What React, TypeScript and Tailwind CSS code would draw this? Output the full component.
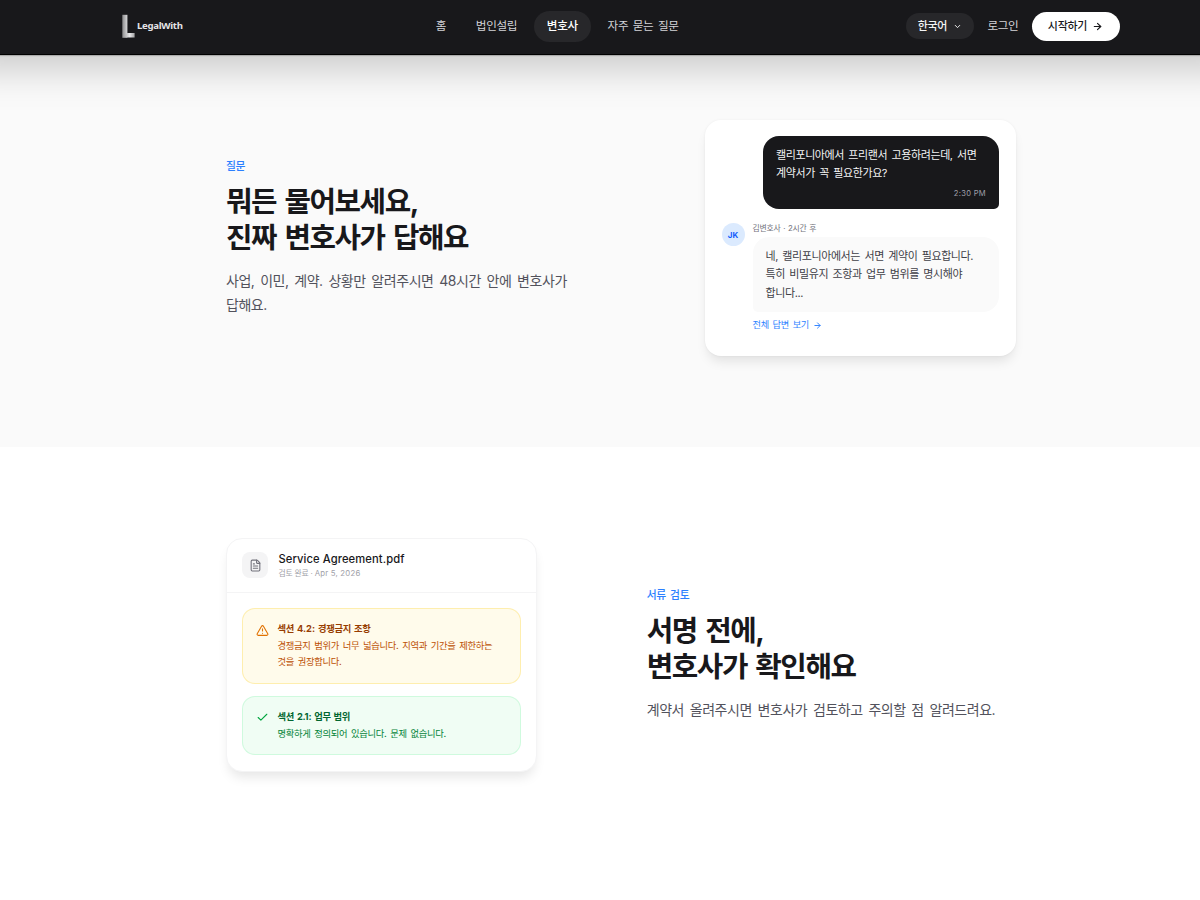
import { ArrowRight, Check, ChevronDown, FileText, TriangleAlert } from "lucide-react";

const navItems = [
  { label: "홈", active: false },
  { label: "법인설립", active: false },
  { label: "변호사", active: true },
  { label: "자주 묻는 질문", active: false },
];

function Logo() {
  return (
    <a href="#" className="flex items-center">
      <svg width="13" height="24" viewBox="0 0 13 24">
        <defs>
          <linearGradient id="stem" x1="0" x2="1">
            <stop offset="0" stopColor="#8b8b8d" />
            <stop offset="1" stopColor="#d8d8da" />
          </linearGradient>
          <linearGradient id="foot" x1="0" x2="1">
            <stop offset="0" stopColor="#8f8f91" />
            <stop offset="0.6" stopColor="#e8e8ea" />
            <stop offset="1" stopColor="#a0a0a2" />
          </linearGradient>
        </defs>
        <path d="M0.3 0.8H5.4V23.6H0.3Z" fill="url(#stem)" />
        <path d="M0.3 23.6L5.4 19H12.6V23.6Z" fill="url(#foot)" />
      </svg>
      <span className="ml-[2px] font-['Noto_Sans'] text-[9.6px] font-bold text-zinc-200">LegalWith</span>
    </a>
  );
}

function Header() {
  return (
    <header className="relative z-10 flex h-[55px] items-center border-b border-black bg-[#18181b] pr-[80.5px] pb-[2px] pl-[122px] text-[11.6px] tracking-[-0.3px] shadow-[0_-16px_34px_32px_rgba(0,0,0,0.18),0_1px_1px_rgba(0,0,0,0.2)]">
      <div className="w-[301px]">
        <Logo />
      </div>
      <nav className="flex items-center gap-[4px]">
        {navItems.map((item) => (
          <a
            key={item.label}
            href="#"
            className={
              item.active
                ? "flex h-[31px] items-center rounded-full bg-[#27272a] px-[12.8px] pt-px font-medium text-white"
                : "flex h-[31px] items-center rounded-full px-[12.8px] pt-px text-zinc-300 [word-spacing:1.5px]"
            }
          >
            {item.label}
          </a>
        ))}
      </nav>
      <div className="ml-auto flex items-center">
        <button className="flex h-[26px] w-[68px] items-center justify-center gap-[6px] rounded-full bg-[#27272a] pt-px pr-px text-[11px] font-medium text-zinc-100">
          한국어
          <ChevronDown size={9} strokeWidth={2.5} />
        </button>
        <a href="#" className="ml-[13px] pt-px text-zinc-300">
          로그인
        </a>
        <button className="ml-[13px] flex h-[29px] w-[88px] items-center justify-center gap-[5px] rounded-full bg-white pt-px text-[11px] font-medium text-zinc-900">
          시작하기
          <ArrowRight size={11} strokeWidth={2.5} />
        </button>
      </div>
    </header>
  );
}

interface IntroProps {
  label: string;
  title: string[];
  text: string;
}

function Intro({ label, title, text }: IntroProps) {
  return (
    <div>
      <p className="mb-[10px] text-[10.8px] leading-[15px] font-medium tracking-[-0.4px] text-blue-500 [word-spacing:1.8px]">
        {label}
      </p>
      <h2 className="mb-[12px] text-[28.8px] leading-[36.5px] font-bold tracking-[-1.45px] text-zinc-900 [word-spacing:3px]">
        {title.map((line) => (
          <span key={line} className="block">
            {line}
          </span>
        ))}
      </h2>
      <p className="pb-px text-[14px] leading-[24px] tracking-[-0.45px] break-keep text-zinc-600 [word-spacing:2.2px]">
        {text}
      </p>
    </div>
  );
}

function ChatCard() {
  return (
    <div className="ml-auto h-[236px] w-[310.5px] rounded-[16px] bg-white px-[16.5px] py-[16px] shadow-[0_8px_12px_-3px_rgba(0,0,0,0.1),0_0_3px_rgba(0,0,0,0.05)]">
      <div className="ml-auto h-[73px] w-[236px] rounded-[16px] rounded-br-[5px] bg-[#18181b] px-[13px] pt-[10px] text-[11px] leading-[18.3px] text-zinc-100">
        <p className="tracking-[-0.41px] [word-spacing:1.7px]">
          캘리포니아에서 프리랜서 고용하려는데, 서면
          <br />
          계약서가 꼭 필요한가요?
        </p>
        <p className="mt-[5px] text-right text-[7.6px] leading-[12px] tracking-[0.3px] text-zinc-400">2:30 PM</p>
      </div>
      <div className="mt-[13px] flex gap-[8px]">
        <div className="mt-[1px] flex size-[23px] shrink-0 items-center justify-center rounded-full bg-blue-100 text-[8px] font-bold text-blue-600">
          JK
        </div>
        <div className="grow">
          <p className="text-[7.8px] leading-[12px] tracking-[-0.2px] text-zinc-500 [word-spacing:0.8px]">
            김변호사 · 2시간 후
          </p>
          <div className="mt-[3px] h-[75px] rounded-[16px] rounded-bl-[5px] bg-[#fafafa] px-[13px] pt-[10px] text-[11px] leading-[18.3px] tracking-[-0.41px] text-zinc-700 [word-spacing:1.7px]">
            네, 캘리포니아에서는 서면 계약이 필요합니다.
            <br />
            특히 비밀유지 조항과 업무 범위를 명시해야
            <br />
            합니다...
          </div>
          <a
            href="#"
            className="mt-[6px] flex items-center gap-[4px] text-[9.2px] leading-[14px] tracking-[-0.3px] text-blue-500 [word-spacing:1.5px]"
          >
            전체 답변 보기
            <ArrowRight size={9} strokeWidth={2.5} />
          </a>
        </div>
      </div>
    </div>
  );
}

function ReviewCard() {
  return (
    <div className="h-[234px] w-[311px] rounded-[16px] border border-zinc-100 bg-white shadow-[0_8px_12px_-3px_rgba(0,0,0,0.1)]">
      <div className="flex h-[54px] items-center gap-[10px] border-b border-zinc-100 px-[15.4px] pb-px">
        <div className="flex size-[26px] items-center justify-center rounded-[8px] bg-zinc-100 text-zinc-500">
          <FileText size={13} />
        </div>
        <div>
          <p className="text-[11.2px] leading-[15px] font-medium tracking-[0.1px] text-zinc-900">
            Service Agreement.pdf
          </p>
          <p className="text-[7.8px] leading-[12px] tracking-[-0.15px] text-zinc-400">
            검토 완료 · <span className="tracking-[0.2px]">Apr 5, 2026</span>
          </p>
        </div>
      </div>
      <div className="flex flex-col gap-[12px] px-[15px] pt-[15px]">
        <div className="flex h-[76px] gap-[8.5px] rounded-[13px] border border-amber-200/60 bg-amber-50 px-[13px] pt-[11px]">
          <TriangleAlert size={13} className="mt-[4px] shrink-0 text-amber-600" />
          <div className="text-[9.3px] tracking-[-0.31px] [word-spacing:1.5px]">
            <p className="leading-[17px] font-bold text-amber-800 [word-spacing:1.1px]">
              섹션 <span className="tracking-normal">4.2:</span> 경쟁금지 조항
            </p>
            <p className="mt-px leading-[16px] text-amber-700">
              경쟁금지 범위가 너무 넓습니다. 지역과 기간을 제한하는
              <br />
              것을 권장합니다.
            </p>
          </div>
        </div>
        <div className="flex h-[59px] gap-[8.5px] rounded-[13px] border border-green-200/60 bg-green-50 px-[13px] pt-[11px]">
          <Check size={13} className="mt-[3px] shrink-0 text-green-600" />
          <div className="text-[9.3px] tracking-[-0.31px] [word-spacing:1.5px]">
            <p className="leading-[17px] font-bold text-green-800 [word-spacing:1px]">
              섹션 <span className="tracking-[-0.2px]">2.1:</span> 업무 범위
            </p>
            <p className="leading-[17px] text-green-700">명확하게 정의되어 있습니다. 문제 없습니다.</p>
          </div>
        </div>
      </div>
    </div>
  );
}

export default function App() {
  return (
    <div className="h-[900px] overflow-hidden bg-white font-[Inter,'Noto_Sans_CJK_KR',sans-serif]">
      <Header />
      <section className="bg-[#fafafa] pt-[65px] pr-[184.5px] pb-[91px] pl-[226px]">
        <div className="grid grid-cols-2 items-center gap-[52px]">
          <Intro
            label="질문"
            title={["뭐든 물어보세요,", "진짜 변호사가 답해요"]}
            text="사업, 이민, 계약. 상황만 알려주시면 48시간 안에 변호사가 답해요."
          />
          <ChatCard />
        </div>
      </section>
      <section className="pt-[91px] pr-[184.5px] pb-[91px] pl-[226px]">
        <div className="grid grid-cols-2 items-center gap-[52px]">
          <ReviewCard />
          <Intro
            label="서류 검토"
            title={["서명 전에,", "변호사가 확인해요"]}
            text="계약서 올려주시면 변호사가 검토하고 주의할 점 알려드려요."
          />
        </div>
      </section>
    </div>
  );
}
